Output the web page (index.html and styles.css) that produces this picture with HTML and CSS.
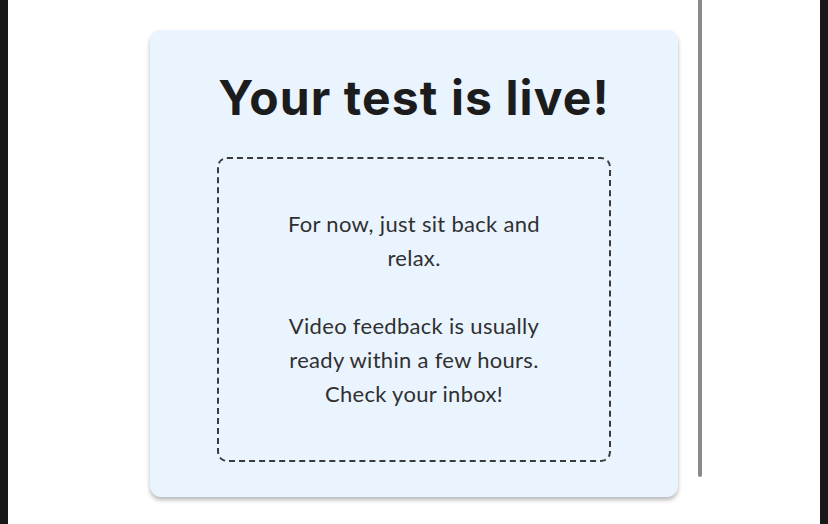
FILE: index.html
```html
<!DOCTYPE html>
<html lang="en">
<head>
<meta charset="utf-8">
<title>Your test is live!</title>
<link rel="stylesheet" href="styles.css">
</head>
<body>
<div class="frame">
  <div class="edge"></div>
  <main class="page">
    <section class="card">
      <h1 class="title">Your test is live!</h1>
      <div class="note">
        <p class="note-text">For now, just sit back and relax.</p>
        <p class="note-text">Video feedback is usually ready within a few hours. Check your inbox!</p>
      </div>
    </section>
    <div class="scroll-line"></div>
  </main>
  <div class="edge"></div>
</div>
</body>
</html>
```
FILE: styles.css
```css
html, body {
  margin: 0;
  padding: 0;
  height: 100%;
  background: #ffffff;
}
.frame {
  display: flex;
  height: 524px;
  width: 828px;
  overflow: hidden;
}
.edge {
  width: 8px;
  flex: 0 0 8px;
  background: #18181b;
}
.page {
  position: relative;
  flex: 1;
  background: #ffffff;
  display: flex;
  justify-content: center;
  align-items: flex-start;
}
.card {
  margin-top: 30px;
  width: 528px;
  height: 467px;
  box-sizing: border-box;
  background: #eaf4ff;
  border-radius: 11px;
  box-shadow: 0 3px 4px rgba(0, 0, 0, 0.28);
  padding: 0 67px 35px;
  display: flex;
  flex-direction: column;
  align-items: stretch;
}
.title {
  margin: 0;
  padding-top: 39px;
  height: 88px;
  font-family: "Inter", "Liberation Sans", sans-serif;
  font-weight: 700;
  font-size: 48px;
  line-height: 58px;
  color: #1c1c1c;
  text-align: center;
  letter-spacing: 1.1px;
  white-space: nowrap;
}
.note {
  flex: 1;
  border: 2px dashed #3a3a3a;
  border-radius: 10px;
  padding: 48px 0;
  display: flex;
  flex-direction: column;
  align-items: center;
  gap: 34px;
}
.note-text {
  margin: 0;
  width: 270px;
  font-family: "Lato", "Liberation Sans", sans-serif;
  font-size: 22px;
  line-height: 34px;
  letter-spacing: 0.3px;
  color: #303030;
  text-align: center;
}
.scroll-line {
  position: absolute;
  left: 690px;
  top: 0;
  width: 4px;
  height: 477px;
  background: #8a8a8a;
  border-radius: 0 0 2px 2px;
}
```
